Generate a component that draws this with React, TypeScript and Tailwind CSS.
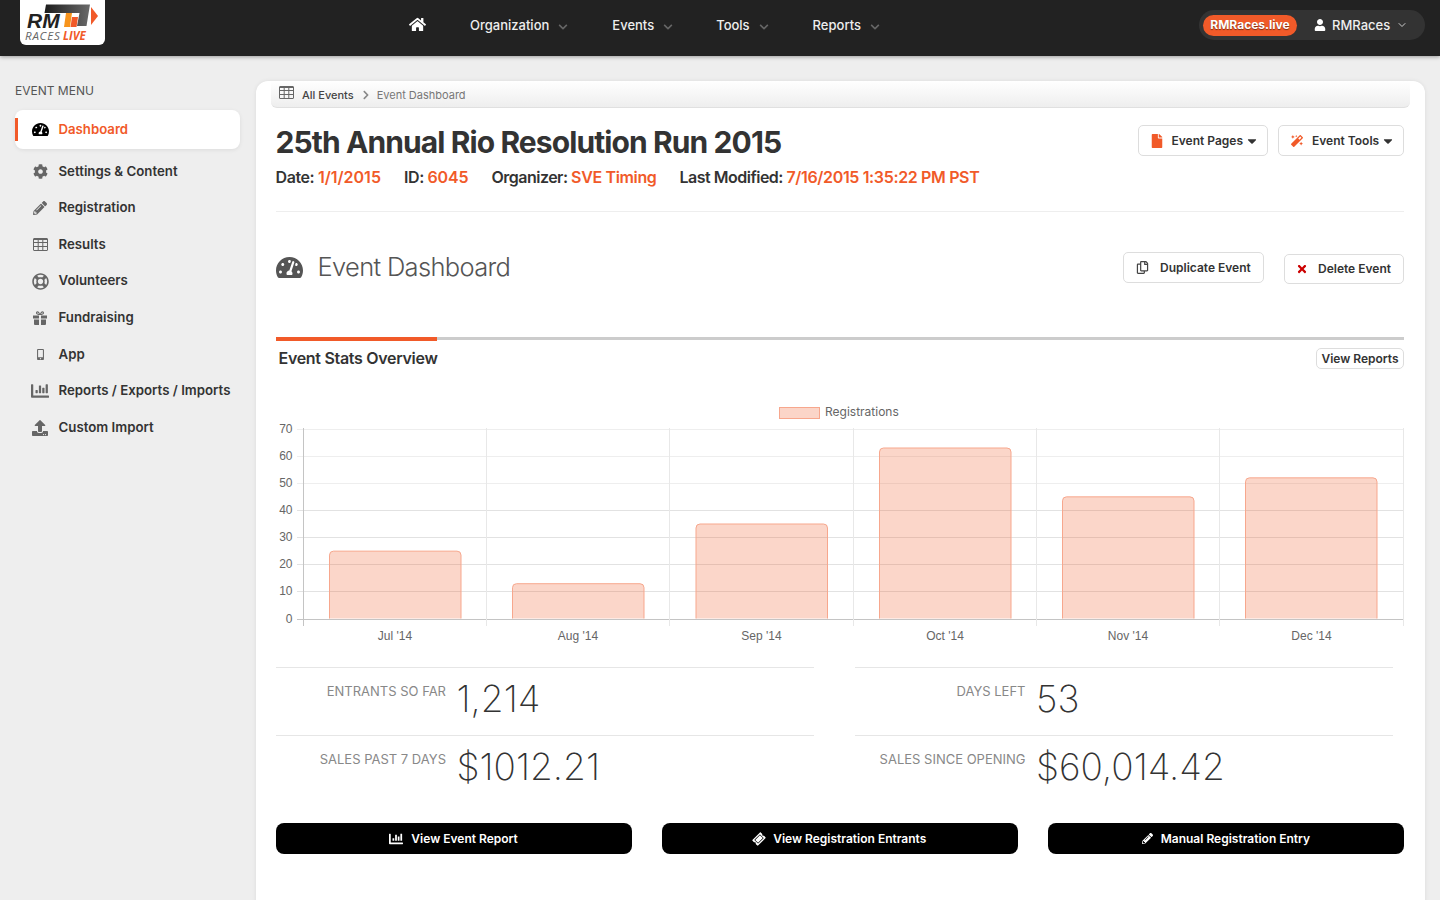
import React from "react";
import {
  FaHome, FaCog, FaPencilAlt, FaRegLifeRing, FaMobileAlt, FaChartBar, FaUpload,
  FaTachometerAlt, FaFile, FaMagic, FaUser, FaTimes, FaRegCopy, FaTicketAlt, FaChevronDown, FaChevronRight, FaCaretDown,
} from "react-icons/fa";
import { ChevronDown } from "lucide-react";

function TableIcon({ className }: { className?: string }) {
  return (
    <svg viewBox="0 0 15 13" className={className} fill="none" stroke="currentColor">
      <rect x="0.5" y="0.5" width="14" height="12" rx="0.5" />
      <path d="M0.5 1.5H14.5M0.5 4.5H14.5M0.5 8.5H14.5M5.2 0.5V12.5M9.8 0.5V12.5" />
    </svg>
  );
}

function GiftIcon({ className }: { className?: string }) {
  return (
    <svg viewBox="0 0 14 14" className={className} fill="currentColor">
      <path d="M0 4.5H6V7.5H0ZM8 4.5H14V7.5H8ZM1 8.5H6V14H2A1 1 0 0 1 1 13ZM8 8.5H13V13A1 1 0 0 1 12 14H8Z" />
      <path d="M7 4C5 4 3 3.6 3 2C3 1 3.6 0.3 4.4 0.3C5.6 0.3 6.6 1.6 7 3C7.4 1.6 8.4 0.3 9.6 0.3C10.4 0.3 11 1 11 2C11 3.6 9 4 7 4Z" fillRule="evenodd" />
      <path d="M4.3 1.4C3.9 1.4 4 2.8 6 2.9C5.6 2 5 1.4 4.3 1.4ZM9.7 1.4C10.1 1.4 10 2.8 8 2.9C8.4 2 9 1.4 9.7 1.4Z" fill="#eeeeee" />
    </svg>
  );
}

function Logo() {
  return (
    <div className="w-[85px] h-[45px] bg-white rounded-b-md shrink-0">
      <svg width="85" height="45" viewBox="0 0 85 45">
        <defs>
          <linearGradient id="g" x1="0" y1="0" x2="1" y2="0">
            <stop offset="0" stopColor="#1c1c1c" />
            <stop offset="1" stopColor="#6a6a6a" />
          </linearGradient>
        </defs>
        <path d="M26 4.5 H70 L66.5 26 H57 L59.5 13 H24.5 Z" fill="url(#g)" />
        <path d="M46 13 H52 L50 27 H44 Z" fill="#f7941d" />
        <path d="M52 17 H58 L56.5 27 H50.5 Z" fill="#f15a29" />
        <path d="M71 7 L78 16 L71 25 Z" fill="#f15a29" />
        <text x="7" y="27.5" fontFamily="'Liberation Sans',sans-serif" fontStyle="italic" fontWeight="700" fontSize="21" fill="#222">RM</text>
        <text x="5" y="40" fontFamily="'Open Sans',sans-serif" fontStyle="italic" fontSize="11.5" letterSpacing="0.8" fill="#666">RACES</text>
        <text x="43" y="40" fontFamily="'Open Sans',sans-serif" fontStyle="italic" fontWeight="700" fontSize="11.5" fill="#f15a29">LIVE</text>
      </svg>
    </div>
  );
}

function NavItem({ label, className }: { label: string; className: string }) {
  return (
    <div className={`flex items-center text-[13px] font-medium text-[#eeeeee] ${className}`}>
      <span>{label}</span>
      <FaChevronDown className="text-[#666] w-[10px] h-[10px] ml-[9px] mt-[3px]" />
    </div>
  );
}

const menu = [
  { label: "Settings & Content", icon: FaCog, cls: "w-[15px] h-[15px]" },
  { label: "Registration", icon: FaPencilAlt, cls: "w-[14px] h-[14px]" },
  { label: "Results", icon: TableIcon, cls: "w-[15px] h-[13px]" },
  { label: "Volunteers", icon: FaRegLifeRing, cls: "w-[17px] h-[17px]" },
  { label: "Fundraising", icon: GiftIcon, cls: "w-[14px] h-[14px]" },
  { label: "App", icon: FaMobileAlt, cls: "w-[11px] h-[11px]" },
  { label: "Reports / Exports / Imports", icon: FaChartBar, cls: "w-[18px] h-[18px]" },
  { label: "Custom Import", icon: FaUpload, cls: "w-[16px] h-[16px]" },
];

function Sidebar() {
  return (
    <aside className="w-[256px] shrink-0 pl-[15px] pr-[16px] pt-[27px]">
      <div className="text-[12px] leading-[16px] text-[#555] mb-[11px]">EVENT MENU</div>
      <div className="relative h-[39px] bg-white rounded-lg shadow-[0_1px_4px_rgba(0,0,0,0.08)] flex items-center pl-[17px] mb-[4.3px]">
        <div className="absolute left-0 top-[8px] w-[3px] h-[23px] bg-[#f15a29]" />
        <div className="w-[17px] flex justify-center"><FaTachometerAlt className="w-[17px] h-[17px] text-black" /></div>
        <span className="ml-[9.5px] text-[13.2px] font-semibold text-[#f15a29]">Dashboard</span>
      </div>
      {menu.map((m) => {
        const I = m.icon;
        return (
          <div key={m.label} className="flex items-center h-[36.6px] pl-[15px]">
            <div className="w-[20px] flex justify-center"><I className={`${m.cls} text-[#666]`} /></div>
            <span className="ml-[8.5px] text-[13.25px] font-semibold text-[#333] whitespace-nowrap">{m.label}</span>
          </div>
        );
      })}
    </aside>
  );
}

function OutlineBtn({ children, className }: { children: React.ReactNode; className: string }) {
  return (
    <div className={`flex items-center bg-white border border-[#dddddd] rounded-[5px] text-[12px] font-semibold text-[#333] whitespace-nowrap ${className}`}>
      {children}
    </div>
  );
}

function Chart() {
  const xs = [303.5, 486.5, 669.5, 853.5, 1036.5, 1219.5, 1403.5];
  const labels = ["Jul '14", "Aug '14", "Sep '14", "Oct '14", "Nov '14", "Dec '14"];
  const vals = [25, 13, 35, 63, 45, 52];
  const ticks = [70, 60, 50, 40, 30, 20, 10, 0];
  const y = (v: number) => 618.5 - v * (190 / 70);
  const font = "'Liberation Sans',Arial,sans-serif";
  return (
    <svg width="1169" height="250" viewBox="256 400 1169 250" className="block">
      <rect x="779.5" y="407.5" width="40" height="11" fill="#fbd5c8" stroke="#f7a78d" />
      <text x="825" y="416" fontFamily="Inter,sans-serif" fontSize="12" fill="#666">Registrations</text>
      {ticks.map((t) => (
        <g key={t}>
          <line x1="297" x2="1404" y1={Math.round(y(t)) + 0.5} y2={Math.round(y(t)) + 0.5} stroke={t === 0 ? "#c4c4c4" : t >= 50 ? "#eeeeee" : "#e2e2e2"} />
          <text x="292.5" y={y(t) + 4} textAnchor="end" fontFamily={font} fontSize="12" fill="#666">{t}</text>
        </g>
      ))}
      {xs.map((x, i) => (
        <line key={x} x1={x} x2={x} y1="428" y2="626" stroke={i === 0 ? "#c4c4c4" : "#e8e8e8"} />
      ))}
      {vals.map((v, i) => {
        const l = [329.5, 512.5, 696, 879.5, 1062.5, 1245.5][i];
        const r = l + 131.5;
        const t = y(v) + 0.5;
        return (
          <path key={i} d={`M${l} 618.5 V${t + 4} Q${l} ${t} ${l + 4} ${t} H${r - 4} Q${r} ${t} ${r} ${t + 4} V618.5`} fill="rgba(241,90,41,0.25)" stroke="#f7a78d" />
        );
      })}
      {labels.map((l, i) => (
        <text key={l} x={(xs[i] + xs[i + 1]) / 2} y="640" textAnchor="middle" fontFamily={font} fontSize="12" fill="#666">{l}</text>
      ))}
    </svg>
  );
}

function Stat({ label, value }: { label: string; value: string }) {
  return (
    <div className="flex h-[68px] border-t border-[#e6e6e6]">
      <div className="w-[170.5px] text-right pt-[16px] text-[13px] leading-[14px] text-[#888] whitespace-nowrap">{label}</div>
      <div className="ml-[10.5px] pt-[8px] text-[37px] leading-[46px] font-[250] text-[#333] whitespace-nowrap">{value}</div>
    </div>
  );
}

function BlackBtn({ icon: I, label, iconClass }: { icon: React.ComponentType<{ className?: string }>; label: string; iconClass: string }) {
  return (
    <div className="flex-1 h-[31px] bg-black rounded-lg flex items-center justify-center gap-[8px] text-white text-[12px] font-semibold">
      <I className={iconClass} />
      <span>{label}</span>
    </div>
  );
}

export default function App() {
  return (
    <div className="h-[900px] overflow-hidden bg-[#eeeeee] font-['Inter',sans-serif]">
      <header className="h-[56px] bg-[#222222] shadow-[0_1px_4px_rgba(0,0,0,0.35)] relative z-10 flex items-start pl-[20px] pr-[15px]">
        <Logo />
        <div className="flex items-center h-[51px] ml-[304px]">
          <FaHome className="w-[17px] h-[17px] text-white -mt-[2px]" />
          <NavItem label="Organization" className="ml-[44px]" />
          <NavItem label="Events" className="ml-[44px]" />
          <NavItem label="Tools" className="ml-[43px]" />
          <NavItem label="Reports" className="ml-[44px]" />
        </div>
        <div className="ml-auto mt-[10px] h-[30px] w-[226px] rounded-full bg-[#333333] flex items-center pl-[4px]">
          <div className="h-[21px] w-[94px] rounded-full bg-[#f15a29] flex items-center justify-center text-[12px] font-bold text-white [text-shadow:0_1px_1px_rgba(0,0,0,0.5)]">RMRaces.live</div>
          <FaUser className="w-[12px] h-[12px] text-white ml-[17px]" />
          <span className="ml-[6px] mt-[1px] text-[13px] font-medium text-[#eeeeee]">RMRaces</span>
          <ChevronDown className="w-[12px] h-[12px] text-[#ccc] ml-[6px]" />
        </div>
      </header>

      <div className="flex">
        <Sidebar />
        <main className="mt-[25px] w-[1169px] h-[900px] bg-white rounded-t-xl shadow-[0_0_4px_rgba(0,0,0,0.08)]">
          <div className="mx-[15px] h-[27px] rounded-b-md bg-gradient-to-b from-white to-[#eeeeee] border-b border-[#e0e0e0] flex items-center pl-[8px] text-[11px]">
            <TableIcon className="w-[15px] h-[13px] text-[#666] -mt-[3px]" />
            <span className="ml-[8px] mt-[2px] font-medium text-[#444]">All Events</span>
            <FaChevronRight className="w-[10px] h-[10px] text-[#888] ml-[7px] mt-[1px]" />
            <span className="ml-[6px] mt-[2px] text-[#777]">Event Dashboard</span>
          </div>

          <div className="pl-[19.5px] pr-[21px]">
            <div className="flex justify-between items-start mt-[16px]">
              <h1 className="text-[30px] leading-[36px] font-bold text-[#333] tracking-[-0.9px] whitespace-nowrap">25th Annual Rio Resolution Run 2015</h1>
              <div className="flex gap-[10px] mt-[1px]">
                <OutlineBtn className="w-[130px] h-[31px] pl-[12px]">
                  <FaFile className="w-[14px] h-[14px] text-[#f15a29] -ml-[1px]" />
                  <span className="ml-[7.5px]">Event Pages</span>
                  <FaCaretDown className="w-[14px] h-[14px] ml-[2px]" />
                </OutlineBtn>
                <OutlineBtn className="w-[126px] h-[31px] pl-[12px]">
                  <FaMagic className="w-[12px] h-[12px] text-[#f15a29]" />
                  <span className="ml-[9px]">Event Tools</span>
                  <FaCaretDown className="w-[14px] h-[14px] ml-[2px]" />
                </OutlineBtn>
              </div>
            </div>
            <div className="mt-[6px] flex gap-[23px] text-[16px] leading-[22px] font-semibold text-[#333] tracking-[-0.5px] whitespace-nowrap">
              <span className="tracking-[-0.4px]">Date: <span className="text-[#f15a29] tracking-[0px]">1/1/2015</span></span>
              <span className="tracking-[-0.4px]">ID: <span className="text-[#f15a29] tracking-[-0.15px]">6045</span></span>
              <span>Organizer: <span className="text-[#f15a29] tracking-[-0.35px]">SVE Timing</span></span>
              <span>Last Modified: <span className="text-[#f15a29] tracking-[-0.35px]">7/16/2015 1:35:22 PM PST</span></span>
            </div>
            <div className="mt-[23px] border-t border-[#eeeeee]" />

            <div className="flex items-start mt-[40px] h-[85px]">
              <FaTachometerAlt className="w-[27px] h-[27px] text-[#555] mt-[2px]" />
              <div className="ml-[15px] text-[25.5px] leading-[30px] font-light tracking-[-0.67px] text-[#555] whitespace-nowrap">Event Dashboard</div>
              <div className="ml-auto flex items-start">
                <OutlineBtn className="w-[141px] h-[31px] pl-[12px]">
                  <FaRegCopy className="w-[13px] h-[13px] text-[#444]" />
                  <span className="ml-[11px]">Duplicate Event</span>
                </OutlineBtn>
                <OutlineBtn className="w-[120px] h-[30px] pl-[11px] ml-[20px] mt-[2px]">
                  <FaTimes className="w-[12px] h-[12px] text-[#cc0000]" />
                  <span className="ml-[10px]">Delete Event</span>
                </OutlineBtn>
              </div>
            </div>

            <div className="h-[3px] bg-[#cccccc]">
              <div className="h-[4px] w-[161px] bg-[#f15a29]" />
            </div>
            <div className="flex justify-between items-start mt-[7px] pl-[3px]">
              <div className="text-[16px] leading-[22px] font-semibold text-[#333] tracking-[-0.3px]">Event Stats Overview</div>
              <OutlineBtn className="h-[21px] w-[88px] mt-[1px] justify-center">View Reports</OutlineBtn>
            </div>
          </div>

          <div className="mt-[31px]">
            <Chart />
          </div>

          <div className="mt-[17px] pl-[19.5px] pr-[21px]">
            <div className="flex gap-[41px] w-[1118px]">
              <div className="w-[538.5px]">
                <Stat label="ENTRANTS SO FAR" value="1,214" />
                <Stat label="SALES PAST 7 DAYS" value="$1012.21" />
              </div>
              <div className="w-[538px]">
                <Stat label="DAYS LEFT" value="53" />
                <Stat label="SALES SINCE OPENING" value="$60,014.42" />
              </div>
            </div>
            <div className="flex gap-[30px] mt-[20px]">
              <BlackBtn icon={FaChartBar} label="View Event Report" iconClass="w-[14px] h-[14px]" />
              <BlackBtn icon={FaTicketAlt} label="View Registration Entrants" iconClass="w-[12px] h-[12px] -rotate-45" />
              <BlackBtn icon={FaPencilAlt} label="Manual Registration Entry" iconClass="w-[11px] h-[11px]" />
            </div>
          </div>
        </main>
      </div>
    </div>
  );
}
